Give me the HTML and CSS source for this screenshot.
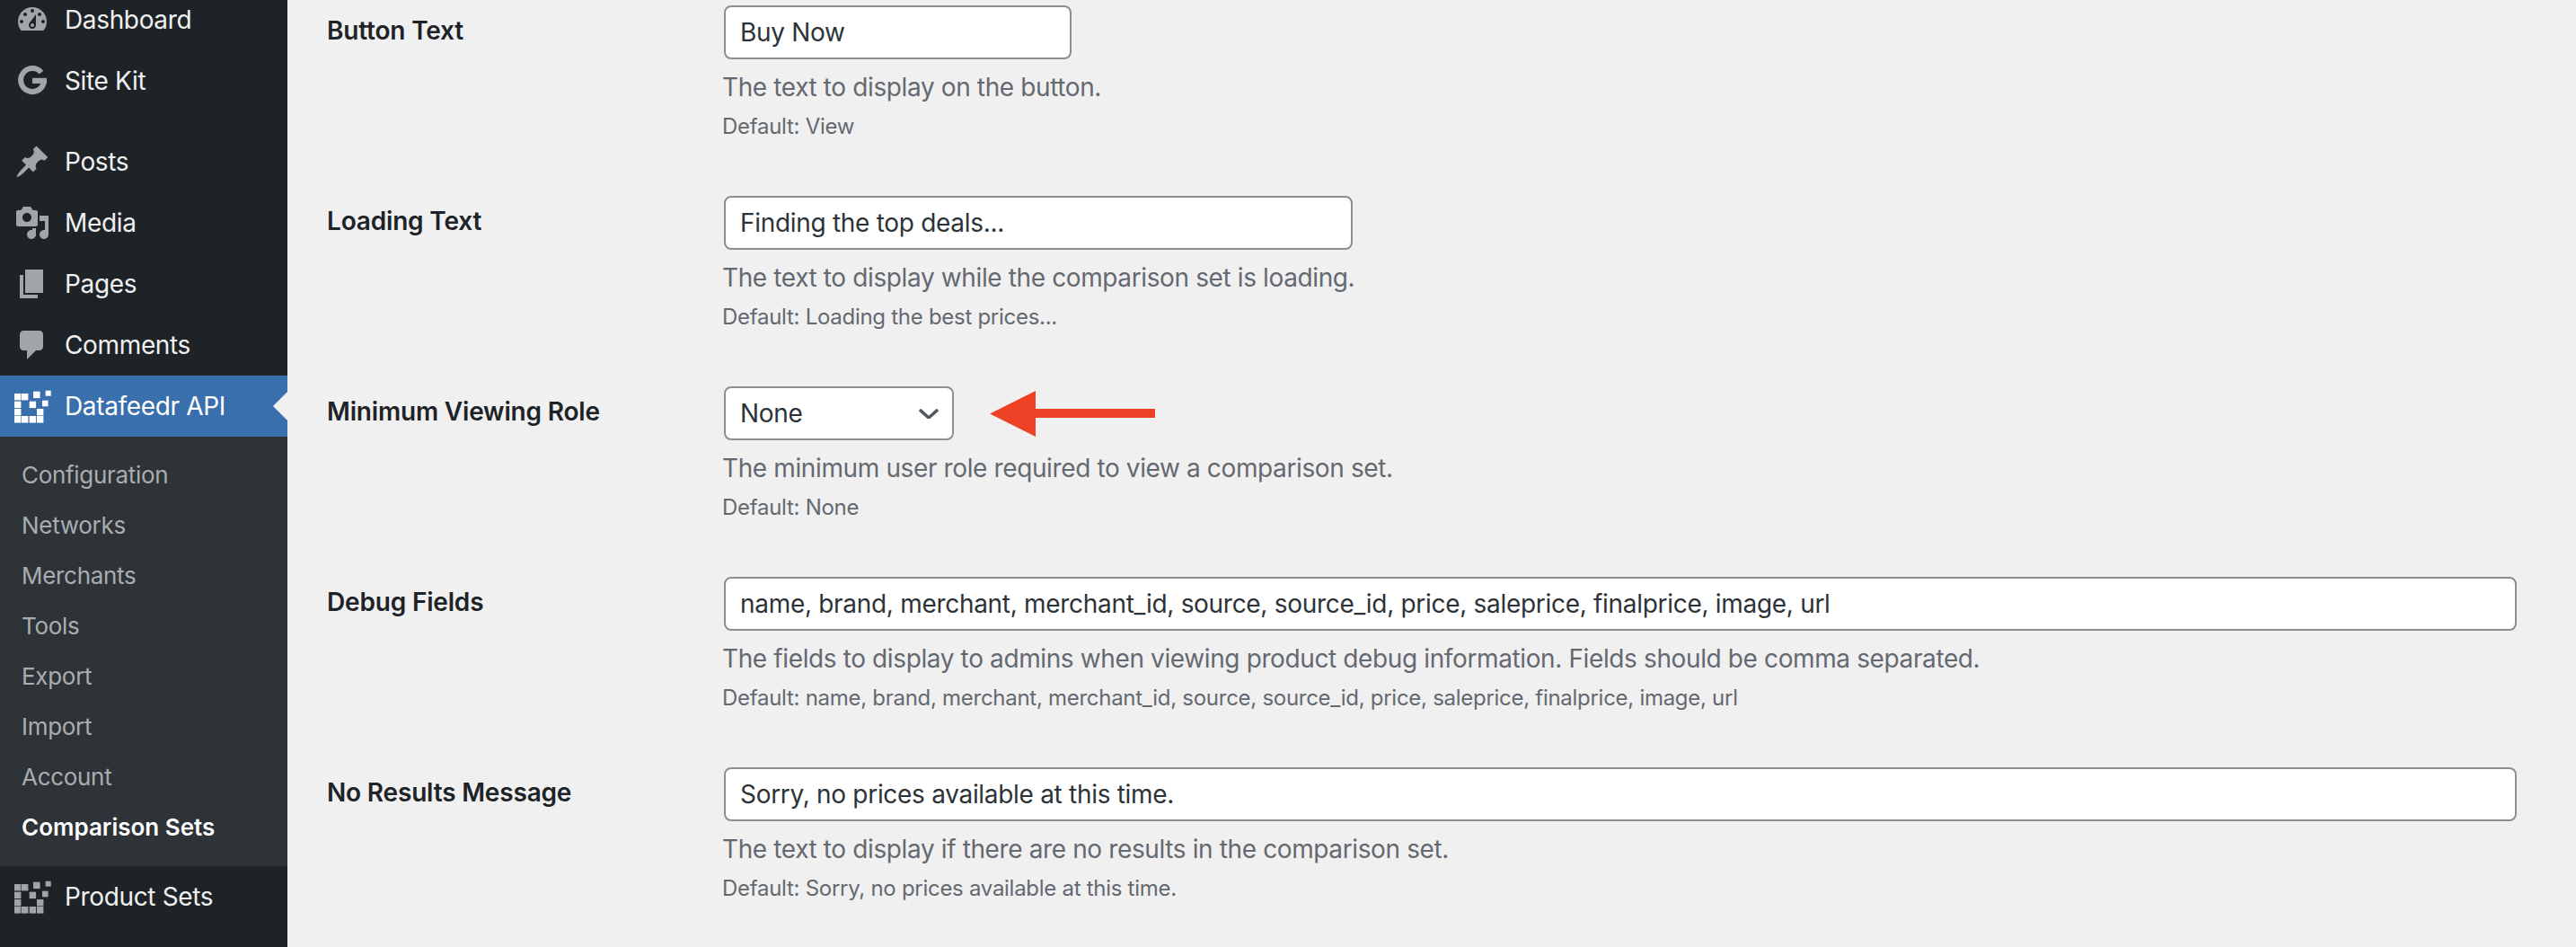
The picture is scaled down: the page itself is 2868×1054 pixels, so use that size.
FILE: index.html
```html
<!DOCTYPE html>
<html lang="en">
<head>
<meta charset="utf-8">
<title>Comparison Sets</title>
<link rel="stylesheet" href="styles.css">
</head>
<body>
<div class="page">
  <nav class="sidebar">
    <ul class="menu">
      <li class="item"><svg class="icon" viewBox="0 0 20 20"><path d="M3.76 16h12.48c1.1-1.37 1.76-3.11 1.76-5 0-4.42-3.58-8-8-8s-8 3.58-8 8c0 1.89.66 3.63 1.76 5zM10 4c.55 0 1 .45 1 1s-.45 1-1 1-1-.45-1-1 .45-1 1-1zM6 6c.55 0 1 .45 1 1s-.45 1-1 1-1-.45-1-1 .45-1 1-1zm8 0c.55 0 1 .45 1 1s-.45 1-1 1-1-.45-1-1 .45-1 1-1zm-5.37 5.55L12 7v6c0 1.1-.9 2-2 2s-2-.9-2-2c0-.57.24-1.08.63-1.45zM4 10c.55 0 1 .45 1 1s-.45 1-1 1-1-.45-1-1 .45-1 1-1zm12 0c.55 0 1 .45 1 1s-.45 1-1 1-1-.45-1-1 .45-1 1-1zm-5 3c0-.55-.45-1-1-1s-1 .45-1 1 .45 1 1 1 1-.45 1-1z" fill-rule="evenodd"/></svg><span>Dashboard</span></li>
      <li class="item"><svg class="icon" viewBox="0 0 20 20"><path class="g-arc" d="M15 5.3A6.5 6.5 0 1 0 16.4 11"/><rect x="10" y="8.4" width="8" height="3.1"/></svg><span>Site Kit</span></li>
      <li class="item item-gap"><svg class="icon" viewBox="0 0 20 20"><path d="M10.44 3.02l1.82-1.82 6.36 6.35-1.83 1.82c-1.05-.68-2.48-.57-3.41.36l-.75.75c-.92.93-1.04 2.35-.35 3.41l-1.83 1.82-2.41-2.41-2.8 2.79c-.42.42-3.38 2.71-3.8 2.29s1.86-3.39 2.28-3.81l2.79-2.79L4.1 9.36l1.83-1.82c1.05.69 2.48.57 3.4-.36l.75-.75c.93-.92 1.05-2.35.36-3.41z"/></svg><span>Posts</span></li>
      <li class="item"><svg class="icon" viewBox="0 0 20 20"><path d="M13 11V4c0-.55-.45-1-1-1h-1.67L9 1H5L3.67 3H2c-.55 0-1 .45-1 1v7c0 .55.45 1 1 1h10c.55 0 1-.45 1-1zM7 4.5c1.38 0 2.5 1.12 2.5 2.5S8.38 9.5 7 9.5 4.5 8.38 4.5 7 5.62 4.5 7 4.5zM14 6h5v10.5c0 1.38-1.12 2.5-2.5 2.5S14 17.88 14 16.5s1.12-2.5 2.5-2.5c.17 0 .34.02.5.05V9h-3V6zm-4 8.05V13h2v3.5c0 1.38-1.12 2.5-2.5 2.5S7 17.88 7 16.5 8.12 14 9.5 14c.17 0 .34.02.5.05z"/></svg><span>Media</span></li>
      <li class="item"><svg class="icon" viewBox="0 0 20 20"><path d="M6 15V2h10v13H6zm-1 1h8v2H3V5h2v11z"/></svg><span>Pages</span></li>
      <li class="item"><svg class="icon" viewBox="0 0 20 20"><path d="M5 2h9c1.1 0 2 .9 2 2v7c0 1.1-.9 2-2 2h-2l-5 5v-5H5c-1.1 0-2-.9-2-2V4c0-1.1.9-2 2-2z"/></svg><span>Comments</span></li>
      <li class="item item-active"><svg class="logo" viewBox="0 0 41 37"><rect x="0" y="4" width="7.4" height="7.4"/><rect x="8" y="4" width="7.4" height="7.4"/><rect x="21" y="1.7" width="7.6" height="7.4"/><rect x="34.7" y=".7" width="6" height="6"/><rect x="0" y="12.7" width="7.4" height="7.4"/><rect x="16.7" y="12.7" width="7.4" height="7.4"/><rect x="31" y="11.7" width="6.6" height="6.6"/><rect x="0" y="21" width="7.4" height="7.4"/><rect x="25" y="21" width="7.4" height="7.4"/><rect x="0" y="29" width="7.4" height="7.6"/><rect x="8" y="29" width="7.4" height="7.6"/><rect x="16.7" y="29" width="7.4" height="7.6"/><rect x="25" y="29" width="7.4" height="7.6"/></svg><span>Datafeedr API</span></li>
      <li class="submenu">
        <ul class="sublist">
          <li class="subitem">Configuration</li>
          <li class="subitem">Networks</li>
          <li class="subitem">Merchants</li>
          <li class="subitem">Tools</li>
          <li class="subitem">Export</li>
          <li class="subitem">Import</li>
          <li class="subitem">Account</li>
          <li class="subitem subitem-current">Comparison Sets</li>
        </ul>
      </li>
      <li class="item"><svg class="logo" viewBox="0 0 41 37"><rect x="0" y="4" width="7.4" height="7.4"/><rect x="8" y="4" width="7.4" height="7.4"/><rect x="21" y="1.7" width="7.6" height="7.4"/><rect x="34.7" y=".7" width="6" height="6"/><rect x="0" y="12.7" width="7.4" height="7.4"/><rect x="16.7" y="12.7" width="7.4" height="7.4"/><rect x="31" y="11.7" width="6.6" height="6.6"/><rect x="0" y="21" width="7.4" height="7.4"/><rect x="25" y="21" width="7.4" height="7.4"/><rect x="0" y="29" width="7.4" height="7.6"/><rect x="8" y="29" width="7.4" height="7.6"/><rect x="16.7" y="29" width="7.4" height="7.6"/><rect x="25" y="29" width="7.4" height="7.6"/></svg><span>Product Sets</span></li>
    </ul>
  </nav>
  <main class="content">
    <section class="row">
      <div class="label">Button Text</div>
      <div class="field">
        <div class="input input-small">Buy Now</div>
        <p class="desc">The text to display on the button.</p>
        <p class="default">Default: View</p>
      </div>
    </section>
    <section class="row">
      <div class="label">Loading Text</div>
      <div class="field">
        <div class="input input-regular">Finding the top deals...</div>
        <p class="desc">The text to display while the comparison set is loading.</p>
        <p class="default">Default: Loading the best prices...</p>
      </div>
    </section>
    <section class="row">
      <div class="label">Minimum Viewing Role</div>
      <div class="field">
        <div class="select-line">
          <div class="input select"><span>None</span><svg class="chevron" viewBox="0 0 22 11"><path d="M1 1l10 9 10-9"/></svg></div>
          <svg class="arrow" viewBox="0 0 184 51"><path d="M0 25.5L51 0v20h133v10H51v21z"/></svg>
        </div>
        <p class="desc">The minimum user role required to view a comparison set.</p>
        <p class="default">Default: None</p>
      </div>
    </section>
    <section class="row">
      <div class="label">Debug Fields</div>
      <div class="field">
        <div class="input input-wide">name, brand, merchant, merchant_id, source, source_id, price, saleprice, finalprice, image, url</div>
        <p class="desc">The fields to display to admins when viewing product debug information. Fields should be comma separated.</p>
        <p class="default">Default: name, brand, merchant, merchant_id, source, source_id, price, saleprice, finalprice, image, url</p>
      </div>
    </section>
    <section class="row">
      <div class="label">No Results Message</div>
      <div class="field">
        <div class="input input-wide">Sorry, no prices available at this time.</div>
        <p class="desc">The text to display if there are no results in the comparison set.</p>
        <p class="default">Default: Sorry, no prices available at this time.</p>
      </div>
    </section>
  </main>
</div>
</body>
</html>
```
FILE: styles.css
```css
* { box-sizing: border-box; }
html, body { margin: 0; padding: 0; height: 100%; overflow: hidden; }
body { background: #f0f0f1; font-family: Inter, "Liberation Sans", sans-serif; color: #1d2327; }
ul { list-style: none; margin: 0; padding: 0; }
p { margin: 0; }

.page { display: flex; height: 1054px; overflow: hidden; }

.sidebar { width: 320px; flex: none; background: #1e2327; overflow: hidden; }
.menu { margin-top: -12px; }
.item { display: flex; align-items: center; height: 68px; padding-left: 16px; font-size: 28px; letter-spacing: -.35px; color: #f0f0f1; position: relative; }
.item-gap { margin-top: 22px; }
.icon { width: 40px; height: 40px; flex: none; fill: #a0a5aa; margin-right: 16px; }
.g-arc { fill: none; stroke: #a0a5aa; stroke-width: 3; }
.logo { width: 41px; height: 37px; flex: none; fill: #a0a5aa; margin-right: 15px; }
.item-active { background: #3a6fad; color: #fff; }
.item-active .logo { fill: #fff; }
.item-active::after { content: ""; position: absolute; right: 0; top: 50%; margin-top: -16px; border: 16px solid transparent; border-left: 0; border-right-color: #f0f0f1; }
.submenu { background: #2e3338; padding: 14px 0 16px; }
.subitem { height: 56px; display: flex; align-items: center; padding-left: 24px; font-size: 26px; letter-spacing: -.3px; color: #a9adb0; }
.subitem-current { color: #fff; font-weight: 600; letter-spacing: 0; }

.content { flex: 1; padding: 6px 66px 0 44px; }
.row { display: grid; grid-template-columns: 442px 1fr; height: 212px; }
.label { font-size: 28px; font-weight: 600; line-height: 36px; margin-top: 10px; letter-spacing: -.18px; color: #1d2327; }
.field { display: flex; flex-direction: column; align-items: flex-start; }
.input { height: 60px; display: flex; align-items: center; background: #fff; border: 2px solid #8c8f94; border-radius: 8px; padding: 0 16px; font-size: 28px; letter-spacing: -.3px; color: #2c3338; }
.input-small { width: 387px; }
.input-regular { width: 700px; }
.input-wide { width: 100%; }
.select-line { display: flex; align-items: center; gap: 40px; }
.select { width: 256px; justify-content: space-between; padding-right: 15px; color: #2c3338; }
.chevron { width: 22px; height: 11px; fill: none; stroke: #50575e; stroke-width: 3.4; }
.arrow { width: 184px; height: 51px; fill: #ee4226; }
.desc { font-size: 28px; line-height: 36px; margin: 13px 0 0 -2px; letter-spacing: -.38px; color: #646970; }
.default { font-size: 24px; line-height: 32px; margin: 10px 0 0 -2px; letter-spacing: -.28px; color: #646970; }
```
